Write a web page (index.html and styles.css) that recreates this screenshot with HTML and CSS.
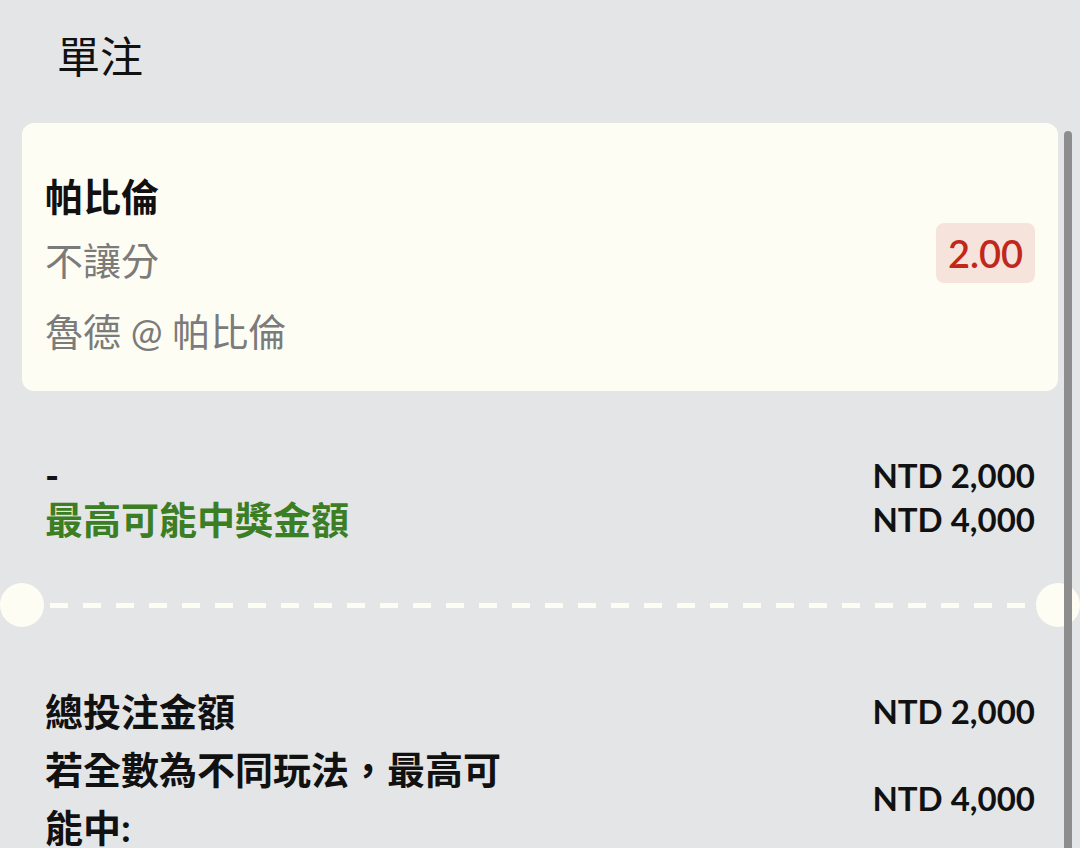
FILE: index.html
```html
<!DOCTYPE html>
<html lang="zh-Hant">
<head>
    <meta charset="UTF-8">
    <meta name="viewport" content="width=device-width, initial-scale=1.0">
    <title>單注</title>
    <link rel="stylesheet" href="styles.css">
</head>
<body>

    <h1 class="sheet-title">單注</h1>

    <!-- Sélection -->
    <div class="bet-card">
        <div class="bet-info">
            <div class="team">帕比倫</div>
            <div class="market">不讓分</div>
            <div class="match">魯德 @ 帕比倫</div>
        </div>
        <div class="odds">2.00</div>
    </div>

    <div class="stake-rows">
        <div class="row">
            <span class="label">-</span>
            <span class="amount">NTD 2,000</span>
        </div>
        <div class="row">
            <span class="label win">最高可能中獎金額</span>
            <span class="amount">NTD 4,000</span>
        </div>
    </div>

    <div class="divider"></div>

    <!-- Totaux -->
    <div class="totals">
        <div class="row">
            <span class="label">總投注金額</span>
            <span class="amount">NTD 2,000</span>
        </div>
        <div class="row">
            <span class="label wrap">若全數為不同玩法，最高可能中:</span>
            <span class="amount">NTD 4,000</span>
        </div>
    </div>

    <div class="scrollbar"></div>

</body>
</html>
```

FILE: styles.css
```css
body {
    font-family: Lato, "Noto Sans CJK TC", sans-serif;
    background-color: #e4e5e7;
    color: #111;
    margin: 0;
    padding: 0 22px;
    height: 848px;
    overflow: hidden;
}
.sheet-title {
    margin: 0;
    padding: 28px 0 0 35px;
    height: 123px;
    box-sizing: border-box;
    font-size: 43px;
    font-weight: 400;
    line-height: 58px;
}
.bet-card {
    display: flex;
    align-items: center;
    justify-content: space-between;
    background-color: #fefdf4;
    border-radius: 12px;
    padding: 45px 23px 31px 23px;
}
.bet-info {
    font-size: 38px;
    line-height: 57px;
}
.team {
    font-weight: 700;
}
.market {
    color: #7b7b7b;
    margin-top: 7px;
}
.match {
    color: #7b7b7b;
    margin-top: 14px;
}
.odds {
    background-color: #f6e4dc;
    color: #c1271b;
    font-size: 38px;
    font-weight: 600;
    line-height: 60px;
    padding: 0 12px;
    border-radius: 8px;
    margin-top: -23px;
}
.row {
    display: flex;
    justify-content: space-between;
    align-items: center;
    padding: 0 23px;
}
.label {
    font-size: 38px;
    font-weight: 700;
}
.amount {
    font-size: 33px;
    font-weight: 700;
}
.stake-rows {
    margin-top: 62px;
}
.stake-rows .row {
    line-height: 44px;
}
.win {
    color: #3b7e24;
}
.divider {
    position: relative;
    height: 44px;
    margin-top: 42px;
    background: repeating-linear-gradient(90deg, #fefdf4 0 18px, transparent 18px 33px) 28px 20px / calc(100% - 56px) 5px no-repeat;
}
.divider::before,
.divider::after {
    content: "";
    position: absolute;
    top: 0;
    width: 44px;
    height: 44px;
    border-radius: 50%;
    background-color: #fefdf4;
}
.divider::before {
    left: -22px;
}
.divider::after {
    right: -22px;
}
.totals {
    margin-top: 55px;
}
.totals .row {
    line-height: 58px;
}
.wrap {
    max-width: 470px;
}
.scrollbar {
    position: absolute;
    top: 131px;
    left: 1064px;
    width: 8px;
    height: 760px;
    border-radius: 4px;
    background-color: #8d8d8d;
}
```
